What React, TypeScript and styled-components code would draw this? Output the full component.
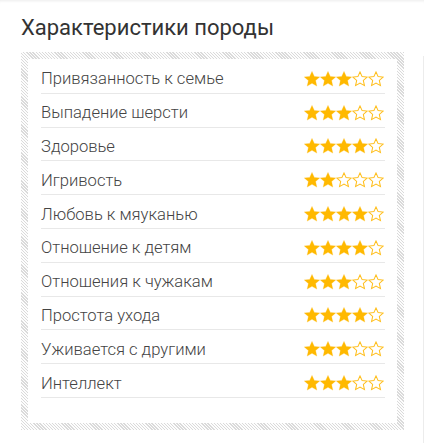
import React from "react";
import styled, { createGlobalStyle } from "styled-components";

const Global = createGlobalStyle`
  html, body { margin: 0; padding: 0; background: #fff; }
  body { font-family: Roboto, "Noto Sans", sans-serif; }
`;

const Page = styled.div`
  position: relative;
  width: 424px;
  height: 443px;
  overflow: hidden;
  background: #fff;
  box-shadow: inset 0 3px 3px -2px rgba(0,0,0,0.08);
`;

const SideLine = styled.div`
  position: absolute;
  right: 0;
  top: 56px;
  bottom: 0;
  width: 1px;
  background: #ececec;
`;

const Section = styled.section`
  padding: 14px 20px 0 21px;
`;

const Title = styled.h2`
  margin: 0 0 10px;
  font-family: Roboto, sans-serif;
  font-weight: 400;
  font-size: 22px;
  line-height: 28px;
  color: #333;
`;

const Frame = styled.div`
  width: 383px;
  box-sizing: border-box;
  padding: 7px;
  background: repeating-linear-gradient(
    45deg,
    #dadada 0px,
    #dadada 1px,
    #fdfdfd 1px,
    #fdfdfd 2.2px
  );
`;

const Inner = styled.div`
  background: #fff;
  padding: 1px 12px 25px 13px;
`;

const Row = styled.div`
  display: flex;
  align-items: center;
  justify-content: space-between;
  height: 33.8px;
  box-sizing: border-box;
  border-bottom: 1.5px solid #e8e8e8;
  padding-top: 5px;
`;

const Label = styled.span`
  font-family: Roboto, sans-serif;
  font-size: 16.6px;
  font-weight: 300;
  color: #444;
`;

const Stars = styled.div`
  display: flex;
  margin-right: 1px;
`;

const StarSvg = styled.svg`
  width: 16px;
  height: 16px;
  display: block;
`;

const STAR = "M8 0.4 L10.3 5.4 L15.7 5.9 L11.6 9.6 L12.8 15.1 L8 12.3 L3.2 15.1 L4.4 9.6 L0.3 5.9 L5.7 5.4 Z";

const Star = ({ filled }: { filled: boolean }) => (
  <StarSvg viewBox="0 0 16 16">
    <path
      d={STAR}
      fill={filled ? "#ffb900" : "none"}
      stroke="#ffbe1a"
      strokeWidth={filled ? 0.3 : 1.1}
      transform={filled ? undefined : "translate(0.6 0.6) scale(0.925)"}
    />
  </StarSvg>
);

const data: [string, number][] = [
  ["Привязанность к семье", 3],
  ["Выпадение шерсти", 3],
  ["Здоровье", 4],
  ["Игривость", 2],
  ["Любовь к мяуканью", 4],
  ["Отношение к детям", 4],
  ["Отношения к чужакам", 3],
  ["Простота ухода", 4],
  ["Уживается с другими", 3],
  ["Интеллект", 3],
];

export default function App() {
  return (
    <Page>
      <Global />
      <SideLine />
      <Section>
        <Title>Характеристики породы</Title>
        <Frame>
          <Inner>
            {data.map(([name, n]) => (
              <Row key={name}>
                <Label>{name}</Label>
                <Stars>
                  {[0, 1, 2, 3, 4].map((i) => (
                    <Star key={i} filled={i < n} />
                  ))}
                </Stars>
              </Row>
            ))}
          </Inner>
        </Frame>
      </Section>
    </Page>
  );
}
